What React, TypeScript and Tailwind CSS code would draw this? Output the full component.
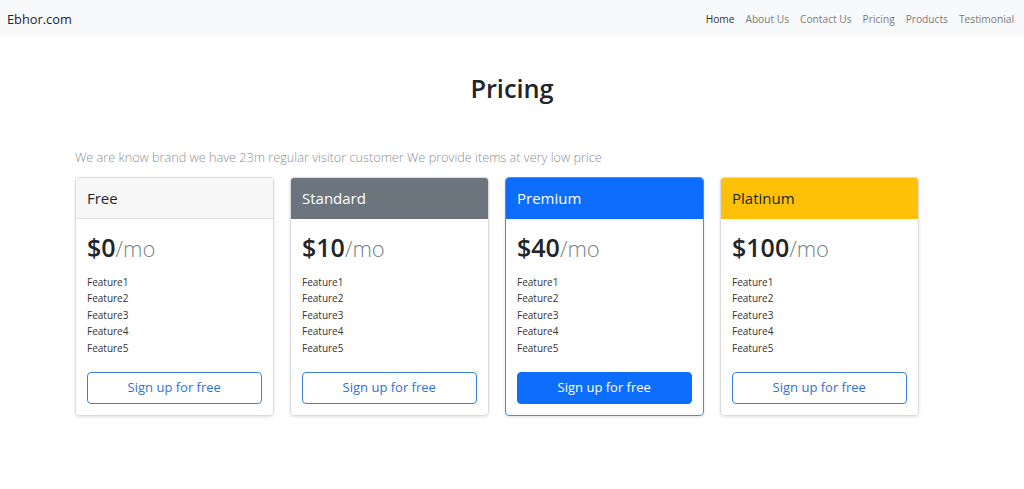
import React from "react";

const plans = [
  { name: "Free", price: "$0", header: "bg-[#f7f7f7] text-[#212529] border-b border-[#dfdfdf]", card: "border-[#dcdcdc]", btn: "border border-[#3a7fd8] text-[#2f74d0] bg-white" },
  { name: "Standard", price: "$10", header: "bg-[#6c757d] text-white", card: "border-[#dcdcdc]", btn: "border border-[#3a7fd8] text-[#2f74d0] bg-white" },
  { name: "Premium", price: "$40", header: "bg-[#0d6efd] text-white", card: "border-[#4b8fd6]", btn: "border border-[#0d6efd] text-white bg-[#0d6efd]" },
  { name: "Platinum", price: "$100", header: "bg-[#ffc107] text-[#212529]", card: "border-[#dcdcdc]", btn: "border border-[#3a7fd8] text-[#2f74d0] bg-white" },
];

export default function App() {
  return (
    <div className="min-h-[489px] bg-white text-[#212529]" style={{ fontFamily: '"Open Sans", "Noto Sans", sans-serif' }}>
      <nav className="h-[37px] bg-[#f8f9fa] flex items-center justify-between pl-[7px] pr-[10px] pt-[2px]">
        <div className="text-[12.8px] text-[#212529]">Ebhor.com</div>
        <div className="flex gap-[11px] text-[10.2px]">
          <span className="text-[#333]">Home</span>
          <span className="text-[#7a7a7a]">About Us</span>
          <span className="text-[#7a7a7a]">Contact Us</span>
          <span className="text-[#7a7a7a]">Pricing</span>
          <span className="text-[#7a7a7a]">Products</span>
          <span className="text-[#7a7a7a]">Testimonial</span>
        </div>
      </nav>
      <h1 className="text-center text-[25.3px] font-semibold mt-[35px] leading-[32px] text-[#212529]">Pricing</h1>
      <div className="pl-[75px] w-[930px]">
        <p className="mt-[45px] text-[12.7px] font-light text-[#8a8f94] leading-[16px]">
          We are know brand we have 23m regular visitor customer We provide items at very low price
        </p>
        <div className="mt-[12px] flex gap-[16.5px]">
          {plans.map((p) => (
            <div key={p.name} className={`w-[198.5px] h-[239px] border rounded-[4px] shadow-[0_1px_3px_rgba(0,0,0,0.12)] overflow-hidden flex flex-col ${p.card}`}>
              <div className={`h-[41px] flex items-center px-[11px] text-[15px] ${p.header}`}>{p.name}</div>
              <div className="px-[11px] pt-[11px] flex flex-col flex-1">
                <div className="leading-[34px]">
                  <span className="text-[25px] font-semibold text-[#212529]">{p.price}</span>
                  <span className="text-[22px] font-light text-[#7a7f84]">/mo</span>
                </div>
                <ul className="mt-[6px] text-[10px] leading-[16.4px] text-[#333]">
                  <li>Feature1</li>
                  <li>Feature2</li>
                  <li>Feature3</li>
                  <li>Feature4</li>
                  <li>Feature5</li>
                </ul>
                <button className={`mt-[16px] h-[32px] w-full rounded-[4px] text-[13px] ${p.btn}`}>Sign up for free</button>
              </div>
            </div>
          ))}
        </div>
      </div>
    </div>
  );
}
